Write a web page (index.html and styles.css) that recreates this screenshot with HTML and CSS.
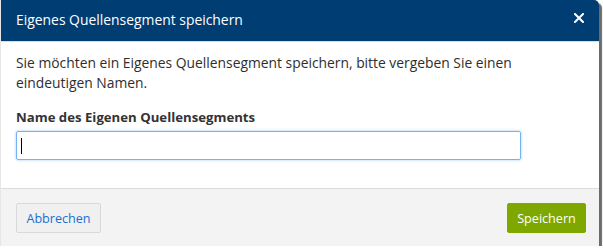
FILE: index.html
```html
<!DOCTYPE html>
<html lang="de">
<head>
<meta charset="utf-8">
<link rel="stylesheet" href="styles.css">
</head>
<body>
<div class="dialog">
  <div class="dialog-header">
    <span class="dialog-title">Eigenes Quellensegment speichern</span>
    <span class="dialog-close">
      <svg width="10" height="10" viewBox="0 0 10 10"><path d="M1 1 L9 9 M9 1 L1 9" stroke="#fff" stroke-width="2" stroke-linecap="square"/></svg>
    </span>
  </div>
  <div class="dialog-body">
    <p class="intro">Sie möchten ein Eigenes Quellensegment speichern, bitte vergeben Sie einen eindeutigen Namen.</p>
    <label class="field-label">Name des Eigenen Quellensegments</label>
    <div class="input"><span class="caret"></span></div>
  </div>
  <div class="dialog-footer">
    <button class="btn btn-cancel">Abbrechen</button>
    <button class="btn btn-save">Speichern</button>
  </div>
</div>
</body>
</html>
```

FILE: styles.css
```css
html, body {
  margin: 0;
  padding: 0;
  background: #ffffff;
}
body {
  font-family: "Open Sans", "Noto Sans", sans-serif;
  color: #333333;
}
.dialog {
  width: 599px;
  height: 246px;
  display: flex;
  flex-direction: column;
  background: #ffffff;
  border-top-right-radius: 5px;
  box-shadow: 3px 3px 1px #6a6a6a;
  overflow: hidden;
  border-left: 1px solid #e6e6e6;
  box-sizing: border-box;
}
.dialog-header {
  height: 41px;
  flex: none;
  background: #003d73;
  display: flex;
  align-items: center;
  justify-content: space-between;
  padding: 0 16px 0 15px;
  border-bottom: 1px solid #dcdcdc;
}
.dialog-title {
  color: #ffffff;
  font-size: 13.9px;
  margin-top: -3px;
}
.dialog-close {
  display: flex;
  margin-top: -6px;
  margin-right: -1px;
}
.dialog-body {
  flex: none;
  height: 147px;
  padding: 11px 16px 0 15px;
  box-sizing: border-box;
  border-bottom: 1px solid #dcdcdc;
}
.intro {
  margin: 0;
  padding-right: 24px;
  font-size: 13.85px;
  line-height: 20px;
  color: #2e2e2e;
}
.field-label {
  display: block;
  margin-top: 14px;
  font-size: 13.2px;
  font-weight: bold;
  line-height: 20px;
}
.input {
  margin-top: 4px;
  width: 505px;
  height: 29px;
  box-sizing: border-box;
  border: 1px solid #74b3ee;
  border-radius: 2px;
  box-shadow: 0 0 3px rgba(100, 170, 240, 0.6);
  display: flex;
  align-items: center;
  padding-left: 4px;
}
.caret {
  width: 1px;
  height: 16px;
  background: #000000;
}
.dialog-footer {
  flex: 1;
  background: #f3f3f3;
  display: flex;
  justify-content: space-between;
  align-items: flex-start;
  padding: 14px 13px 0 15px;
}
.btn {
  height: 30px;
  font-family: "Open Sans", "Noto Sans", sans-serif;
  font-size: 12.6px;
  border-radius: 2px;
  padding: 0 8px;
  cursor: pointer;
}
.btn-cancel {
  width: 85px;
  background: #f0f0f0;
  border: 1px solid #d9d9d9;
  color: #1a6fd1;
}
.btn-save {
  width: 79px;
  background: #7ea800;
  border: 1px solid #7ea800;
  color: #ffffff;
}
```
